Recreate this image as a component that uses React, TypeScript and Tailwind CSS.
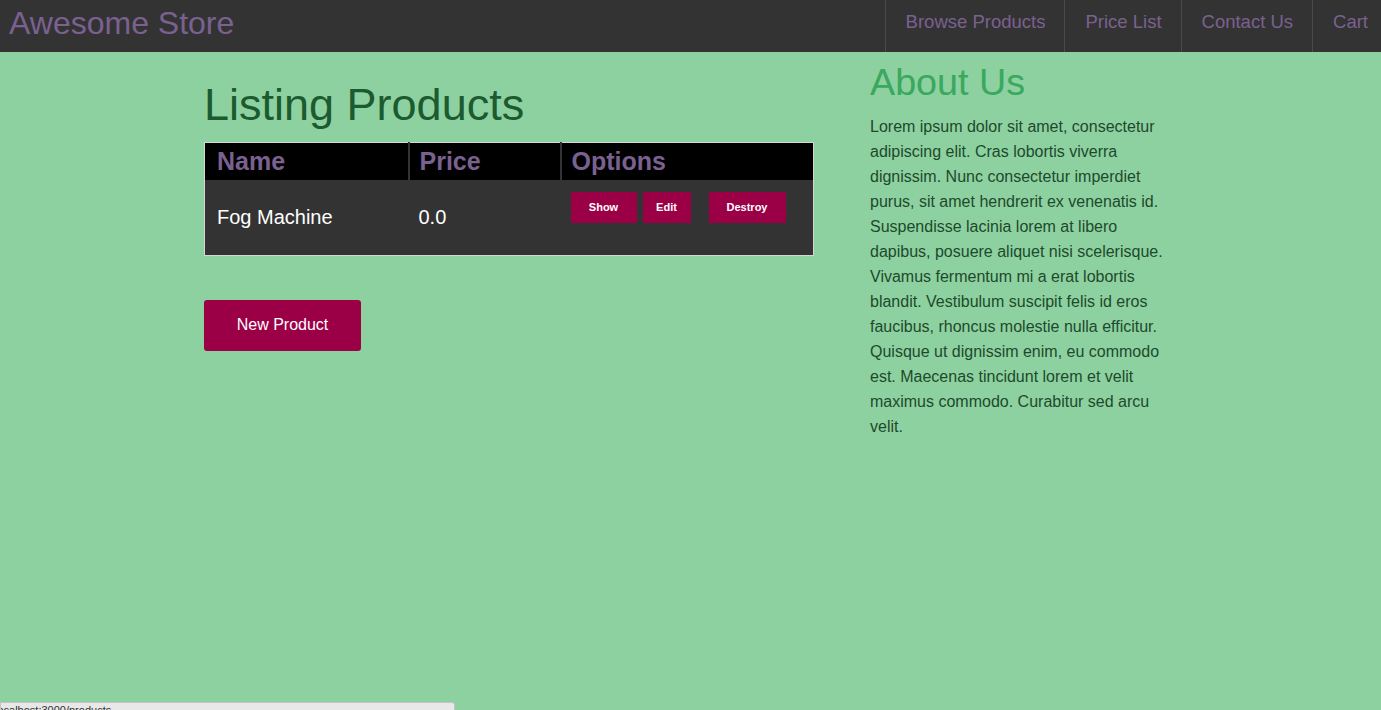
const navLinks = ['Browse Products', 'Price List', 'Contact Us', 'Cart'];

const products = [{ name: 'Fog Machine', price: '0.0' }];

const aboutText =
  'Lorem ipsum dolor sit amet, consectetur adipiscing elit. Cras lobortis viverra dignissim. Nunc consectetur imperdiet purus, sit amet hendrerit ex venenatis id. Suspendisse lacinia lorem at libero dapibus, posuere aliquet nisi scelerisque. Vivamus fermentum mi a erat lobortis blandit. Vestibulum suscipit felis id eros faucibus, rhoncus molestie nulla efficitur. Quisque ut dignissim enim, eu commodo est. Maecenas tincidunt lorem et velit maximus commodo. Curabitur sed arcu velit.';

export default function App() {
  return (
    <div className="min-h-[710px] bg-[#8dd1a0] font-['Liberation_Sans',Arial,sans-serif]">
      {/* Navbar */}
      <nav className="flex h-[52px] items-stretch justify-between bg-[#333333]">
        <a href="#" className="flex items-center pb-[6px] pl-[9px] text-[32px] leading-none text-[#7a6190]">
          Awesome Store
        </a>
        <ul className="flex items-stretch">
          {navLinks.map((link, i) => (
            <li
              key={link}
              className={`flex items-center border-l border-[#4a4a4a] pl-5 ${i === navLinks.length - 1 ? 'pr-[13px]' : 'pr-[19px]'}`}
            >
              <a href="#" className="pb-[8px] text-[18.5px] text-[#7a6190]">
                {link}
              </a>
            </li>
          ))}
        </ul>
      </nav>

      <div className="mx-auto flex w-[973px]">
        {/* Products */}
        <main className="w-[610px]">
          <h1 className="mt-[28px] mb-[12px] text-[45px] leading-[1.1] text-[#1c5a2f]">Listing Products</h1>

          <table className="w-[610px] border-collapse border border-[#d6d6d6] text-left">
            <thead>
              <tr className="h-[38px] bg-black text-[25px] font-bold text-[#7a6190]">
                <th className="w-[204px] px-3 leading-none">Name</th>
                <th className="w-[152px] border-l-2 border-[#333333] px-[10px] leading-none">Price</th>
                <th className="border-l-2 border-[#333333] px-[10px] leading-none">Options</th>
              </tr>
            </thead>
            <tbody>
              {products.map((p) => (
                <tr key={p.name} className="h-[75px] bg-[#333333] text-[20px] text-white">
                  <td className="px-3 align-middle">{p.name}</td>
                  <td className="px-[10px] align-middle">{p.price}</td>
                  <td className="px-[10px] pt-3 align-top">
                    <div className="flex text-[11px] font-bold">
                      <button className="h-[31px] w-[66px] shrink-0 bg-[#9b0046] text-white">Show</button>
                      <button className="ml-[6px] h-[31px] w-[48px] shrink-0 bg-[#9b0046] text-white">Edit</button>
                      <button className="ml-[18px] h-[31px] w-[77px] shrink-0 bg-[#9b0046] text-white">Destroy</button>
                    </div>
                  </td>
                </tr>
              ))}
            </tbody>
          </table>

          <button className="mt-[44px] h-[51px] w-[157px] rounded-[3px] bg-[#9b0046] text-[16px] text-white">
            New Product
          </button>
        </main>

        {/* About */}
        <aside className="ml-[56px] w-[300px]">
          <h2 className="mt-[10px] text-[37.7px] leading-[1.1] text-[#3aa85e]">About Us</h2>
          <p className="mt-[11px] text-[16px] leading-[25px] text-[#1d4a2b]">{aboutText}</p>
        </aside>
      </div>

      {/* Browser status bubble */}
      <div className="fixed top-[702px] left-0 h-[20px] w-[455px] overflow-hidden rounded-tr-[3px] border border-[#c4c4c4] bg-[#e8e8e8] text-[11px] leading-[14px] text-[#333]">
        <span className="ml-[-6px]">localhost:3000/products</span>
      </div>
    </div>
  );
}
